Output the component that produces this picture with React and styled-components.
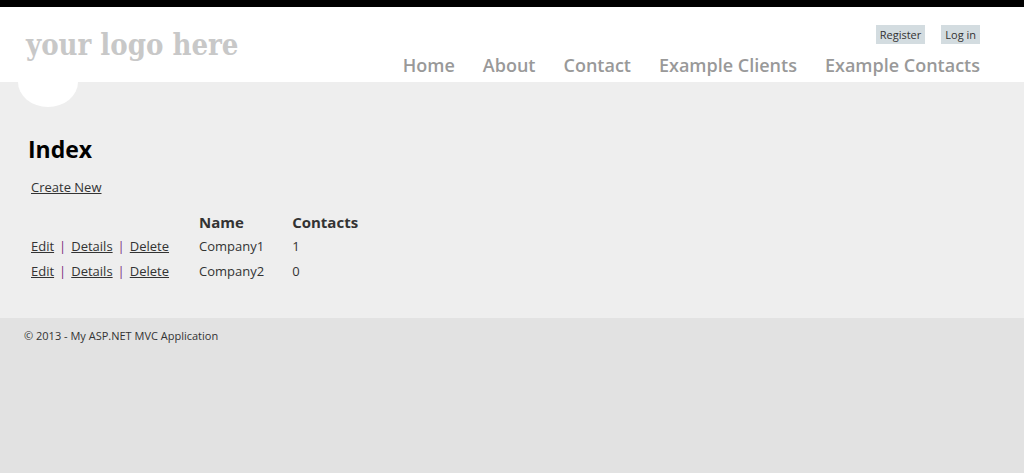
import React from "react";
import styled, { createGlobalStyle } from "styled-components";

const Global = createGlobalStyle`
  html { background: #e2e2e2; }
  body {
    margin: 0;
    border-top: 7px solid #000;
    color: #333;
    font-family: "Open Sans", "Noto Sans", sans-serif;
    font-size: 13px;
    line-height: 18px;
  }
  * { box-sizing: border-box; }
`;

const Header = styled.header`
  display: flex;
  justify-content: space-between;
  min-height: 75px;
  padding: 0 44px 0 26px;
  background: #fff;
`;

const Logo = styled.a`
  margin-top: 18px;
  color: #c8c8c8;
  font-family: "DejaVu Serif Condensed", "DejaVu Serif", serif;
  font-size: 29px;
  font-weight: 700;
  line-height: 40px;
  text-decoration: none;
  white-space: nowrap;
`;

const HeaderTools = styled.div`
  display: flex;
  flex-direction: column;
  align-items: flex-end;
  padding-top: 18px;
`;

const Account = styled.section`
  display: flex;
  gap: 16px;
`;

const AccountLink = styled.a`
  padding: 0 4px;
  background: #d3dce0;
  color: #333;
  font-size: 11px;
  line-height: 19px;
  text-decoration: none;
`;

const Nav = styled.nav`
  display: flex;
  gap: 28px;
  margin-top: 8px;
`;

const NavLink = styled.a`
  color: #999;
  font-size: 18px;
  font-weight: 600;
  line-height: 26px;
  text-decoration: none;
  white-space: nowrap;
`;

const Main = styled.main`
  padding: 0 28px 34px;
  background: #eee;
`;

const Notch = styled.div`
  width: 60px;
  height: 25px;
  margin-left: -10px;
  border-radius: 0 0 50% 50% / 0 0 100% 100%;
  background: #fff;
`;

const Title = styled.h2`
  margin: 26px 0 0;
  color: #000;
  font-size: 23px;
  font-weight: 700;
  line-height: 32px;
`;

const Create = styled.p`
  margin: 13px 3px 14px;
`;

const TextLink = styled.a`
  color: #333;
`;

const Table = styled.table`
  border-collapse: collapse;
`;

const HeadCell = styled.th`
  padding: 0 28px 0 0;
  font-size: 15px;
  font-weight: 700;
  line-height: 24px;
  text-align: left;
`;

const Cell = styled.td`
  padding: 0 28px 0 0;
  line-height: 25px;
`;

const Actions = styled.div`
  display: flex;
  gap: 5px;
  padding: 0 2px 0 3px;
  color: #7b2f7d;
`;

const Footer = styled.footer`
  padding: 9px 24px;
  font-size: 11px;
`;

const navItems = ["Home", "About", "Contact", "Example Clients", "Example Contacts"];
const clients = [
  { name: "Company1", contacts: 1 },
  { name: "Company2", contacts: 0 },
];

export default function App() {
  return (
    <>
      <Global />
      <Header>
        <Logo href="#">your logo here</Logo>
        <HeaderTools>
          <Account>
            <AccountLink href="#">Register</AccountLink>
            <AccountLink href="#">Log in</AccountLink>
          </Account>
          <Nav>
            {navItems.map((item) => <NavLink href="#" key={item}>{item}</NavLink>)}
          </Nav>
        </HeaderTools>
      </Header>
      <Main>
        <Notch />
        <Title>Index</Title>
        <Create><TextLink href="#">Create New</TextLink></Create>
        <Table>
          <thead>
            <tr>
              <HeadCell />
              <HeadCell>Name</HeadCell>
              <HeadCell>Contacts</HeadCell>
            </tr>
          </thead>
          <tbody>
            {clients.map((client) => (
              <tr key={client.name}>
                <Cell>
                  <Actions>
                    <TextLink href="#">Edit</TextLink>|
                    <TextLink href="#">Details</TextLink>|
                    <TextLink href="#">Delete</TextLink>
                  </Actions>
                </Cell>
                <Cell>{client.name}</Cell>
                <Cell>{client.contacts}</Cell>
              </tr>
            ))}
          </tbody>
        </Table>
      </Main>
      <Footer>© 2013 - My ASP.NET MVC Application</Footer>
    </>
  );
}
